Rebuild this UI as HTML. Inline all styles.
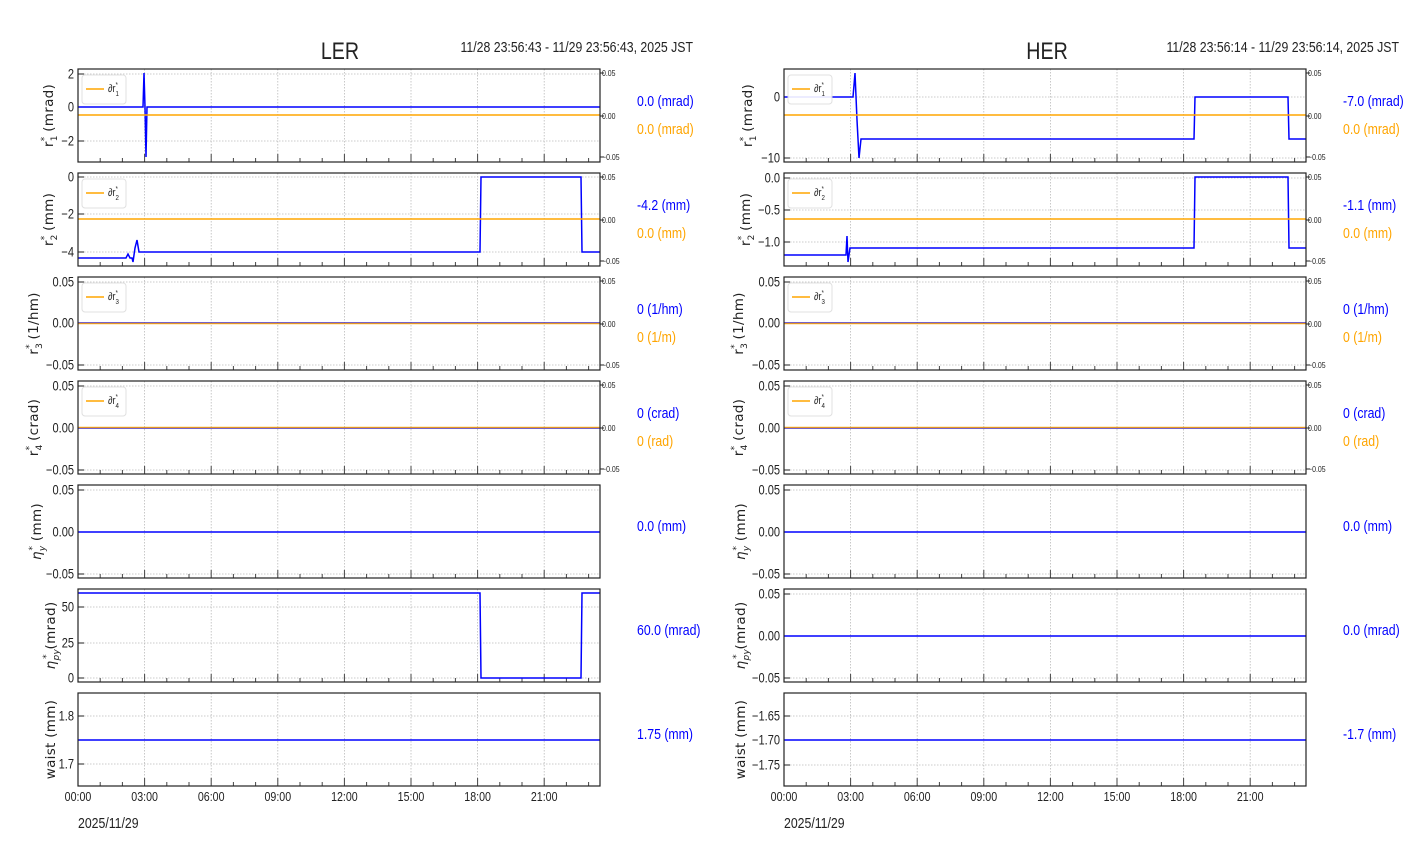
<!DOCTYPE html>
<html><head><meta charset="utf-8">
<style>
html,body{margin:0;padding:0;background:#fff;}
svg{display:block;}
text{font-family:"Liberation Sans",sans-serif;fill:#222;}
</style></head>
<body>
<svg id="s" width="1412" height="864" xmlns="http://www.w3.org/2000/svg"></svg>
<script>
const S=document.getElementById('s');
let h='';
const H=22.2;
function T(x,y,size,anchor,content,fill,sx){sx=sx||0.82;
  return `<text transform="translate(${x},${y}) scale(${sx},1)" font-size="${size}" text-anchor="${anchor||'start'}"${fill?` style="fill:${fill}"`:''}>${content}</text>`;}
function panel(x0,top,bot,yt,rightAx,blue,orange,legend,ylab,vals,lo){
  const x1=x0+522;
  for(let k=1;k<=7;k++){const x=x0+k*3*H;h+=`<line x1="${x}" y1="${top}" x2="${x}" y2="${bot}" stroke="#bbb" stroke-width="0.8" stroke-dasharray="1.5,1.5"/>`;}
  yt.forEach(([y,l])=>{h+=`<line x1="${x0}" y1="${y}" x2="${x1}" y2="${y}" stroke="#bbb" stroke-width="0.8" stroke-dasharray="1.5,1.5"/>`;
    h+=`<line x1="${x0}" y1="${y}" x2="${x0+6}" y2="${y}" stroke="#222" stroke-width="1"/>`;
    h+=T(x0-4,y+4.5,13.5,'end',l);});
  for(let k=1;k<=23;k++){const x=x0+k*H;h+=`<line x1="${x}" y1="${bot}" x2="${x}" y2="${bot-(k%3==0?8:4)}" stroke="#444" stroke-width="1"/>`;}
  if(rightAx){[[top+4,'0.05'],[(top+bot)/2+0.5,'0.00'],[bot-5,'\u22120.05']].forEach(([y,l])=>{
    h+=`<line x1="${x1}" y1="${y}" x2="${x1+4}" y2="${y}" stroke="#222"/>`;
    h+=T(x1+2,y+3,8.5,'start',l);});}
  h+=`<polyline points="${blue}" fill="none" stroke="#0000ff" stroke-width="1.5"/>`;
  if(orange!==null) h+=`<line x1="${x0}" y1="${orange}" x2="${x1}" y2="${orange}" stroke="#ffa500" stroke-opacity="${orange%1?0.85:1}" stroke-width="1.5"/>`;
  if(legend){h+=`<rect x="${x0+4}" y="${top+6}" width="44" height="29" rx="3" fill="#fff" stroke="#ddd" stroke-width="1" opacity="0.9"/>`;
    h+=`<line x1="${x0+8}" y1="${top+20}" x2="${x0+26}" y2="${top+20}" stroke="#ffa500" stroke-width="1.5"/>`;
    h+=T(x0+30,top+23,11,'start',`∂r<tspan font-size="7.5" dy="4">${legend}</tspan><tspan font-size="7" dx="-4" dy="-9">*</tspan>`);}
  h+=`<rect x="${x0}" y="${top}" width="522" height="${bot-top}" fill="none" stroke="#222" stroke-width="1.2"/>`;
  const cy=(top+bot)/2;
  h+=`<text transform="translate(${x0-lo+5},${cy}) rotate(-90)" font-size="13.5" text-anchor="middle" style="font-family:'DejaVu Sans',sans-serif;letter-spacing:0.3px">${ylab}</text>`;
  if(vals){h+=T(x0+559,vals[0][0],15,'start',vals[0][1],'#0000ff');
    if(vals[1]) h+=T(x0+559,vals[1][0],15,'start',vals[1][1],'#ffa500');}
}
function lab(sym,sub,unit){return `${sym}<tspan font-size="9" dy="4">${sub}</tspan><tspan font-size="9" dx="-6" dy="-10">*</tspan><tspan dy="6">  ${unit}</tspan>`;}
const etaY='<tspan font-style="italic">η</tspan><tspan font-size="9" dy="4" font-style="italic">y</tspan><tspan font-size="9" dx="-5" dy="-10">*</tspan><tspan dy="6">  (mm)</tspan>';
const etaP='<tspan font-style="italic">η</tspan><tspan font-size="9" dy="4" font-style="italic">py</tspan><tspan font-size="9" dx="-10" dy="-10">*</tspan><tspan dy="6">  (mrad)</tspan>';
const tops=[69,173,277,381,485,589,693];
function side(x0,cfg){
  cfg.forEach((c,i)=>{const t=tops[i],b=t+93;panel(x0,t,b,c.yt,c.ra,c.blue,c.or,c.leg,c.lab,c.vals,c.lo);});
  ['00:00','03:00','06:00','09:00','12:00','15:00','18:00','21:00'].forEach((l,k)=>{h+=T(x0+k*3*H,801,13,'middle',l);});
  h+=T(x0,828,15,'start','2025/11/29');
}
side(78,[
 {lo:30,yt:[[74,'2'],[107,'0'],[141,'\u22122']],ra:1,or:115,leg:'1',lab:lab('r','1','(mrad)'),vals:[[106,'0.0 (mrad)'],[134,'0.0 (mrad)']],
  blue:'78,107 143,107 144,73 145,107 146,157 147,107 600,107'},
 {lo:30,yt:[[177,'0'],[214,'\u22122'],[252,'\u22124']],ra:1,or:219,leg:'2',lab:lab('r','2','(mm)'),vals:[[210,'-4.2 (mm)'],[238,'0.0 (mm)']],
  blue:'78,258 126,258 128,254 130,258 132,258 133,262 135,248 137,240 139,252 480,252 481,177 581,177 582,252 600,252'},
 {lo:45,yt:[[282,'0.05'],[323,'0.00'],[365,'\u22120.05']],ra:1,or:323.5,leg:'3',lab:lab('r','3','(1/hm)'),vals:[[314,'0 (1/hm)'],[342,'0 (1/m)']],
  blue:'78,323 600,323'},
 {lo:45,yt:[[386,'0.05'],[428,'0.00'],[470,'\u22120.05']],ra:1,or:427.5,leg:'4',lab:lab('r','4','(crad)'),vals:[[418,'0 (crad)'],[446,'0 (rad)']],
  blue:'78,428 600,428'},
 {lo:42,yt:[[490,'0.05'],[532,'0.00'],[574,'\u22120.05']],ra:0,or:null,leg:null,lab:etaY,vals:[[531,'0.0 (mm)']],
  blue:'78,532 600,532'},
 {lo:28,yt:[[607,'50'],[643,'25'],[678,'0']],ra:0,or:null,leg:null,lab:etaP,vals:[[635,'60.0 (mrad)']],
  blue:'78,593 480,593 481,678 581,678 582,593 600,593'},
 {lo:28,yt:[[716,'1.8'],[764,'1.7']],ra:0,or:null,leg:null,lab:'waist (mm)',vals:[[739,'1.75 (mm)']],
  blue:'78,740 600,740'}
]);
side(784,[
 {lo:37,yt:[[97,'0'],[158,'\u221210']],ra:1,or:115,leg:'1',lab:lab('r','1','(mrad)'),vals:[[106,'-7.0 (mrad)'],[134,'0.0 (mrad)']],
  blue:'784,97 853,97 855,73 857,120 859,158 861,139 1194,139 1195,97 1288,97 1289,139 1306,139'},
 {lo:39,yt:[[178,'0.0'],[210,'\u22120.5'],[242,'\u22121.0']],ra:1,or:219,leg:'2',lab:lab('r','2','(mm)'),vals:[[210,'-1.1 (mm)'],[238,'0.0 (mm)']],
  blue:'784,255 846,255 847,236 848,262 850,248 1194,248 1195,177 1288,177 1289,248 1306,248'},
 {lo:46,yt:[[282,'0.05'],[323,'0.00'],[365,'\u22120.05']],ra:1,or:323.5,leg:'3',lab:lab('r','3','(1/hm)'),vals:[[314,'0 (1/hm)'],[342,'0 (1/m)']],
  blue:'784,323 1306,323'},
 {lo:46,yt:[[386,'0.05'],[428,'0.00'],[470,'\u22120.05']],ra:1,or:427.5,leg:'4',lab:lab('r','4','(crad)'),vals:[[418,'0 (crad)'],[446,'0 (rad)']],
  blue:'784,428 1306,428'},
 {lo:44,yt:[[490,'0.05'],[532,'0.00'],[574,'\u22120.05']],ra:0,or:null,leg:null,lab:etaY,vals:[[531,'0.0 (mm)']],
  blue:'784,532 1306,532'},
 {lo:44,yt:[[594,'0.05'],[636,'0.00'],[678,'\u22120.05']],ra:0,or:null,leg:null,lab:etaP,vals:[[635,'0.0 (mrad)']],
  blue:'784,636 1306,636'},
 {lo:44,yt:[[716,'\u22121.65'],[740,'\u22121.70'],[765,'\u22121.75']],ra:0,or:null,leg:null,lab:'waist (mm)',vals:[[739,'-1.7 (mm)']],
  blue:'784,740 1306,740'}
]);
h+=T(340,59,24,'middle','LER');
h+=T(693,52,15,'end','11/28 23:56:43 - 11/29 23:56:43, 2025 JST');
h+=T(1047,59,24,'middle','HER');
h+=T(1399,52,15,'end','11/28 23:56:14 - 11/29 23:56:14, 2025 JST');
S.innerHTML=h;
</script>
</body></html>
